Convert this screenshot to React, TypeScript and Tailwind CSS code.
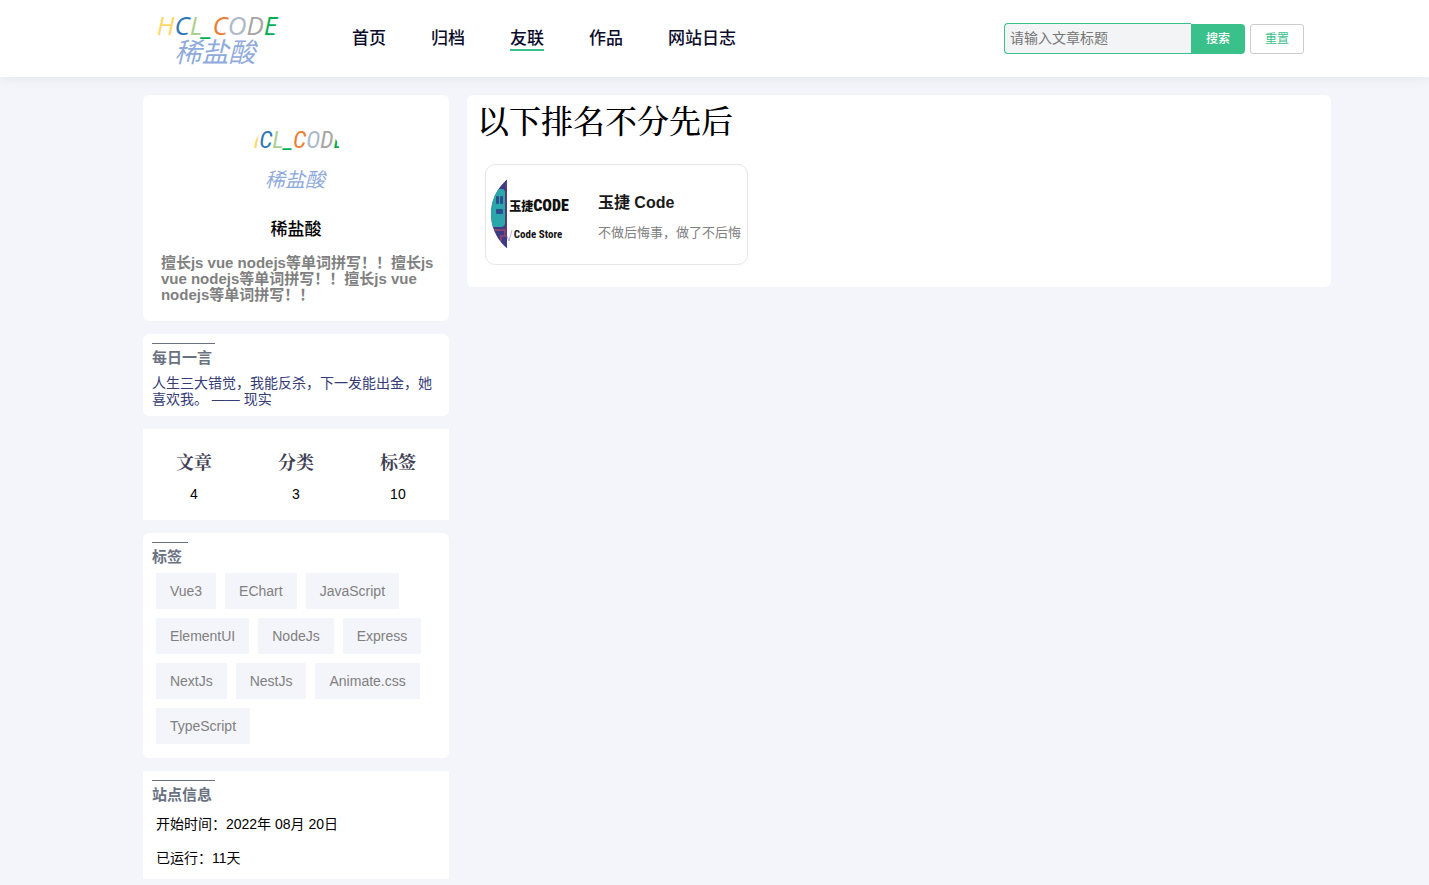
import type { ReactNode } from "react";

const navItems = ["首页", "归档", "友联", "作品", "网站日志"];
const activeItem = "友联";

const stats = [
  { label: "文章", value: 4 },
  { label: "分类", value: 3 },
  { label: "标签", value: 10 },
];

const tags = [
  "Vue3",
  "EChart",
  "JavaScript",
  "ElementUI",
  "NodeJs",
  "Express",
  "NextJs",
  "NestJs",
  "Animate.css",
  "TypeScript",
];

function BrandLetters() {
  return (
    <>
      <tspan fill="#ffd966">H</tspan>
      <tspan fill="#2e75b6">C</tspan>
      <tspan fill="#a9d18e">L</tspan>
      <tspan fill="#00b050">_</tspan>
      <tspan fill="#ed7d31">C</tspan>
      <tspan fill="#adb9ca">O</tspan>
      <tspan fill="#a5a5a5">D</tspan>
      <tspan fill="#00b050">E</tspan>
    </>
  );
}

function Logo() {
  return (
    <svg width="132" height="60" viewBox="0 0 132 60" role="img" aria-label="HCL_CODE 稀盐酸">
      <text
        x="66"
        y="26"
        textAnchor="middle"
        className="font-['Open_Sans','Noto_Sans',sans-serif] text-[26px] italic"
      >
        <BrandLetters />
      </text>
      <text
        x="64"
        y="53"
        textAnchor="middle"
        fill="#8faadc"
        className="font-['Noto_Sans_CJK_SC',sans-serif] text-[27px] italic"
      >
        稀盐酸
      </text>
    </svg>
  );
}

function Avatar() {
  return (
    <svg width="90" height="90" viewBox="0 0 90 90" role="img" aria-label="稀盐酸">
      <clipPath id="avatar-circle">
        <circle cx="45" cy="45" r="45" />
      </clipPath>
      <g clipPath="url(#avatar-circle)">
        <text
          x="44"
          y="33"
          textAnchor="middle"
          className="font-['Roboto_Condensed','Liberation_Sans_Narrow','Open_Sans',sans-serif] text-[24px] italic"
        >
          <BrandLetters />
        </text>
        <text
          x="44"
          y="72"
          textAnchor="middle"
          fill="#8faadc"
          className="font-['Noto_Sans_CJK_SC',sans-serif] text-[20px] italic"
        >
          稀盐酸
        </text>
      </g>
    </svg>
  );
}

function FriendLogo() {
  return (
    <svg width="90" height="90" viewBox="0 0 90 90" role="img" aria-label="玉捷CODE Code Store">
      <clipPath id="friend-circle">
        <circle cx="46" cy="45" r="45" />
      </clipPath>
      <g clipPath="url(#friend-circle)">
        <rect x="0" y="8" width="17" height="74" fill="#3d3a86" />
        <path d="M0 20H12Q15 20 15 24V54Q15 58 11 58H0Z" fill="#2ba6ab" />
        <rect x="6" y="27" width="3" height="8" rx="1" fill="#2b4f8c" />
        <rect x="10" y="27" width="3" height="8" rx="1" fill="#2b4f8c" />
        <rect x="6" y="40" width="7" height="5" rx="1" fill="#2b4f8c" />
        <path d="M4 61H15V67H11V72" fill="none" stroke="#85456f" strokeWidth="2" />
        <path d="M16 10V66" fill="none" stroke="#68406e" strokeWidth="1" />
        <path d="M17 67L19 72L22 61" fill="none" stroke="#b5b2cf" strokeWidth="1" />
        <text
          x="49"
          y="42"
          textAnchor="middle"
          fill="#111111"
          className="font-['Roboto_Condensed','Noto_Sans_CJK_SC',sans-serif] font-black"
        >
          <tspan className="text-[12px]">玉捷</tspan>
          <tspan className="text-[16px]">CODE</tspan>
        </text>
        <text
          x="48"
          y="69"
          textAnchor="middle"
          fill="#111111"
          className="font-['Roboto_Condensed','Liberation_Sans',sans-serif] text-[11px] font-bold"
        >
          Code Store
        </text>
      </g>
    </svg>
  );
}

function PanelTitle({ children }: { children: ReactNode }) {
  return (
    <h2 className="w-fit min-w-9 border-t border-gray-500 pt-[3px] pr-[3px] text-[15px] leading-[22px] font-bold text-gray-500">
      {children}
    </h2>
  );
}

function Header() {
  return (
    <header className="flex h-[77px] items-center bg-white pr-[125px] pl-[10%] shadow-[0_2px_12px_rgba(0,0,0,0.06)]">
      <a href="#home" className="ml-2 shrink-0">
        <Logo />
      </a>
      <nav className="ml-[69px] flex shrink-0 gap-[45px] text-[17px] leading-5 font-medium text-[#0b0b2b]">
        {navItems.map((item) => (
          <a
            key={item}
            href={`#${item}`}
            className={
              item === activeItem
                ? "border-b-2 border-[#3ac08a] pt-[2px]"
                : "border-b-2 border-transparent pt-[2px]"
            }
          >
            {item}
          </a>
        ))}
      </nav>
      <form className="ml-auto flex items-center" onSubmit={(e) => e.preventDefault()}>
        <input
          type="text"
          aria-label="请输入文章标题"
          placeholder="请输入文章标题"
          className="h-[31px] w-[187px] rounded-l border border-r-0 border-[#3ac08a] bg-gray-100 px-[5px] pb-[2px] text-sm outline-none placeholder:text-[#757575]"
        />
        <button
          type="submit"
          className="h-[30px] w-[54px] rounded-r bg-[#3ac08a] text-xs font-medium text-white"
        >
          搜索
        </button>
        <button
          type="reset"
          className="ml-[5px] h-[30px] w-[54px] rounded-[3px] border border-[#cccccc] bg-white text-xs text-[#3ac08a]"
        >
          重置
        </button>
      </form>
    </header>
  );
}

function Sidebar() {
  return (
    <aside className="flex w-[306px] shrink-0 flex-col gap-[13px]">
      <section className="rounded-md bg-white pt-5 pr-[10px] pb-[18px] pl-[18px]">
        <div className="mr-2 flex justify-center">
          <Avatar />
        </div>
        <h1 className="mt-[14px] mr-2 text-center text-[17px] leading-[22px] font-medium">
          稀盐酸
        </h1>
        <p className="mt-[14px] text-[15px] leading-4 font-bold text-[#808080]">
          擅长js vue nodejs等单词拼写！！擅长js vue nodejs等单词拼写！！擅长js vue
          nodejs等单词拼写！！
        </p>
      </section>

      <section className="rounded-md bg-white p-[9px]">
        <PanelTitle>每日一言</PanelTitle>
        <p className="mt-[6px] text-sm leading-4 text-[#363b76]">
          人生三大错觉，我能反杀，下一发能出金，她喜欢我。 —— 现实
        </p>
      </section>

      <section className="bg-white pt-5 pb-4">
        <dl className="grid grid-cols-3 text-center">
          {stats.map((s) => (
            <div key={s.label}>
              <dt className="font-['Noto_Serif_CJK_SC','Noto_Sans_CJK_SC',serif] text-lg leading-6 font-bold text-[#3f3f55]">
                {s.label}
              </dt>
              <dd className="mt-[11px] text-sm leading-5">{s.value}</dd>
            </div>
          ))}
        </dl>
      </section>

      <section className="rounded-md bg-white px-[9px] pt-[9px] pb-[14px]">
        <PanelTitle>标签</PanelTitle>
        <ul className="mx-1 mt-[5px] flex flex-wrap gap-[9px]">
          {tags.map((tag) => (
            <li key={tag}>
              <a
                href={`#${tag}`}
                className="block bg-[#f4f5fa] px-[14px] text-sm leading-9 text-[#808080]"
              >
                {tag}
              </a>
            </li>
          ))}
        </ul>
      </section>

      <section className="bg-white px-[9px] pt-[9px] pb-[11px]">
        <PanelTitle>站点信息</PanelTitle>
        <div className="mt-2 ml-1 flex flex-col gap-[14px] text-sm leading-5">
          <p>开始时间：2022年 08月 20日</p>
          <p>已运行：11天</p>
        </div>
      </section>
    </aside>
  );
}

function FriendCard() {
  return (
    <a
      href="#friend"
      className="flex w-fit items-center rounded-[10px] border border-[#e6e6e6] bg-white py-1 pr-[6px] pl-1"
    >
      <div className="h-[91px]">
        <FriendLogo />
      </div>
      <div className="ml-[18px] pt-1">
        <h3 className="text-base leading-6 font-bold text-[#1a1a1a]">玉捷 Code</h3>
        <p className="mt-2 text-[13px] leading-5 text-[#808080]">不做后悔事，做了不后悔</p>
      </div>
    </a>
  );
}

export default function App() {
  return (
    <div
      lang="zh-CN"
      className="min-h-screen bg-[#f4f5fa] font-['Liberation_Sans','Noto_Sans_CJK_SC',sans-serif] text-black"
    >
      <Header />
      <div className="flex items-start gap-[18px] pt-[18px] pr-[98px] pb-[6px] pl-[10%]">
        <Sidebar />
        <main className="min-w-0 flex-1 rounded-md bg-white px-[18px] pt-[9px] pb-[22px]">
          <h2 className="-ml-2 font-['Liberation_Serif','Noto_Serif_CJK_SC','Noto_Sans_CJK_SC',serif] text-[32px] leading-9 font-medium">
            以下排名不分先后
          </h2>
          <div className="mt-6">
            <FriendCard />
          </div>
        </main>
      </div>
    </div>
  );
}
